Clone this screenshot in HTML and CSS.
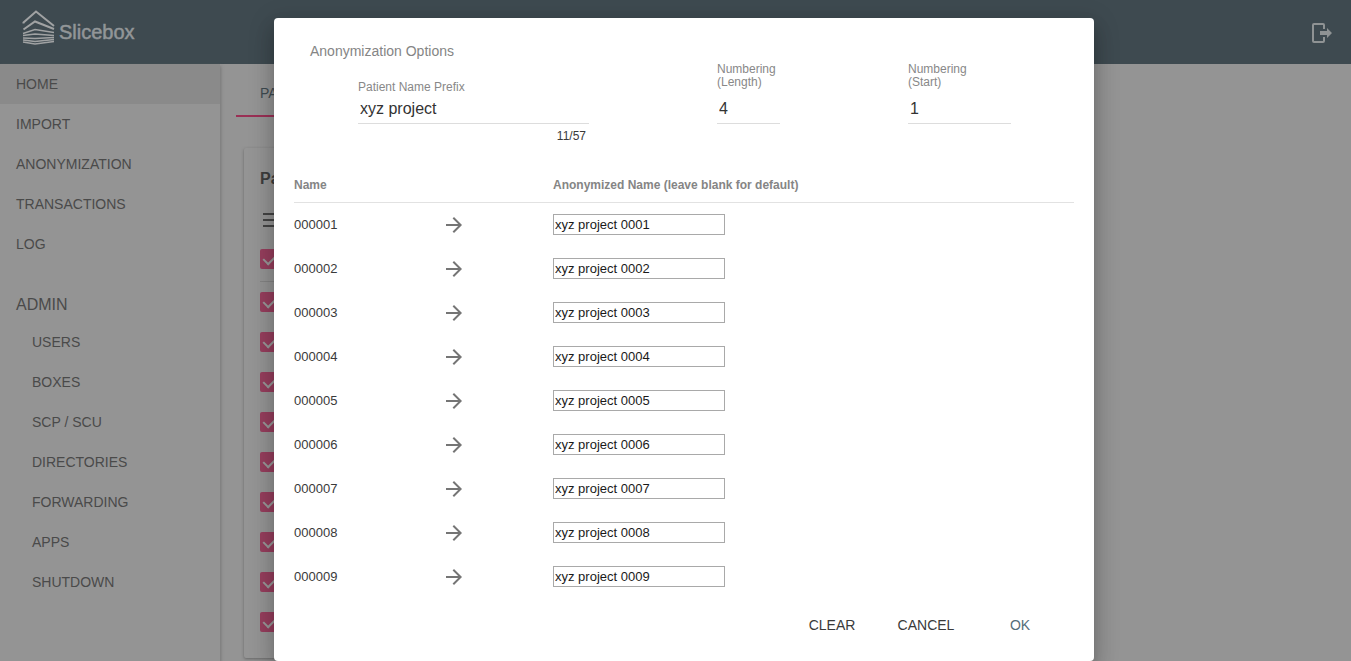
FILE: index.html
```html
<!DOCTYPE html>
<html lang="en">
<head>
<meta charset="utf-8">
<title>Slicebox</title>
<link rel="stylesheet" href="styles.css">
</head>
<body>
<svg class="defs" aria-hidden="true">
  <symbol id="arrow" viewBox="0 0 24 24"><path d="M12 4l-1.41 1.41L16.17 11H4v2h12.170l-5.580 5.590L12 20l8-8z"/></symbol>
</svg>
<div class="app">
  <header class="toolbar">
    <a class="brand" href="#">
      <svg class="logo" viewBox="0 0 33 36" aria-hidden="true">
        <path class="roof" d="M1.500 13.500V12.500L14 1.500L32 16M1.500 19.500L13 11.500L32 19"/>
        <path d="M1 23.500L13 19.500L32 22.500M1 25.500L13 24L32 25.500M1 28L13 28.500L32 27.500M1 30L13 31.500L32 29.500M1 32L13 34L32 31.500"/>
      </svg>
      <span>Slicebox</span>
    </a>
    <button class="logout" aria-label="Log out">
      <svg viewBox="0 0 22 22" aria-hidden="true"><path class="door" d="M13 7V3Q13 2 12 2H3Q2 2 2 3V19Q2 20 3 20H12Q13 20 13 19V15"/><path class="out" d="M9 9H16V6L21 11L16 16V13H9Z"/></svg>
    </button>
  </header>
  <div class="body">
    <nav class="sidenav">
      <a class="active" href="#">HOME</a>
      <a href="#">IMPORT</a>
      <a href="#">ANONYMIZATION</a>
      <a href="#">TRANSACTIONS</a>
      <a href="#">LOG</a>
      <h2>ADMIN</h2>
      <div class="sub">
        <a href="#">USERS</a>
        <a href="#">BOXES</a>
        <a href="#">SCP / SCU</a>
        <a href="#">DIRECTORIES</a>
        <a href="#">FORWARDING</a>
        <a href="#">APPS</a>
        <a href="#">SHUTDOWN</a>
      </div>
    </nav>
    <main class="content">
      <div class="tabs"><button class="tab">PA</button></div>
      <section class="card">
        <h3>Pa</h3>
        <button class="menu" aria-label="Menu"><i></i><i></i><i></i></button>
        <label class="check all"><input type="checkbox" checked aria-label="Select all"></label>
        <label class="check"><input type="checkbox" checked aria-label="Select 1"></label>
        <label class="check"><input type="checkbox" checked aria-label="Select 2"></label>
        <label class="check"><input type="checkbox" checked aria-label="Select 3"></label>
        <label class="check"><input type="checkbox" checked aria-label="Select 4"></label>
        <label class="check"><input type="checkbox" checked aria-label="Select 5"></label>
        <label class="check"><input type="checkbox" checked aria-label="Select 6"></label>
        <label class="check"><input type="checkbox" checked aria-label="Select 7"></label>
        <label class="check"><input type="checkbox" checked aria-label="Select 8"></label>
        <label class="check"><input type="checkbox" checked aria-label="Select 9"></label>
      </section>
    </main>
  </div>
</div>
<div class="backdrop">
  <form class="dialog" role="dialog" aria-labelledby="title">
    <h1 id="title">Anonymization Options</h1>
    <div class="fields">
      <div class="field">
        <label for="prefix">Patient Name Prefix</label>
        <input id="prefix" type="text" value="xyz project">
        <span class="count">11/57</span>
      </div>
      <div class="field">
        <label for="length">Numbering<br>(Length)</label>
        <input id="length" type="text" value="4">
      </div>
      <div class="field">
        <label for="start">Numbering<br>(Start)</label>
        <input id="start" type="text" value="1">
      </div>
    </div>
    <table class="names">
      <thead><tr><th class="c-name">Name</th><th class="c-arrow"></th><th>Anonymized Name (leave blank for default)</th></tr></thead>
      <tbody>
        <tr><td>000001</td><td class="to"><svg class="arrow"><use href="#arrow"/></svg></td><td><input type="text" aria-label="Anonymized name 000001" value="xyz project 0001"></td></tr>
        <tr><td>000002</td><td class="to"><svg class="arrow"><use href="#arrow"/></svg></td><td><input type="text" aria-label="Anonymized name 000002" value="xyz project 0002"></td></tr>
        <tr><td>000003</td><td class="to"><svg class="arrow"><use href="#arrow"/></svg></td><td><input type="text" aria-label="Anonymized name 000003" value="xyz project 0003"></td></tr>
        <tr><td>000004</td><td class="to"><svg class="arrow"><use href="#arrow"/></svg></td><td><input type="text" aria-label="Anonymized name 000004" value="xyz project 0004"></td></tr>
        <tr><td>000005</td><td class="to"><svg class="arrow"><use href="#arrow"/></svg></td><td><input type="text" aria-label="Anonymized name 000005" value="xyz project 0005"></td></tr>
        <tr><td>000006</td><td class="to"><svg class="arrow"><use href="#arrow"/></svg></td><td><input type="text" aria-label="Anonymized name 000006" value="xyz project 0006"></td></tr>
        <tr><td>000007</td><td class="to"><svg class="arrow"><use href="#arrow"/></svg></td><td><input type="text" aria-label="Anonymized name 000007" value="xyz project 0007"></td></tr>
        <tr><td>000008</td><td class="to"><svg class="arrow"><use href="#arrow"/></svg></td><td><input type="text" aria-label="Anonymized name 000008" value="xyz project 0008"></td></tr>
        <tr><td>000009</td><td class="to"><svg class="arrow"><use href="#arrow"/></svg></td><td><input type="text" aria-label="Anonymized name 000009" value="xyz project 0009"></td></tr>
      </tbody>
    </table>
    <div class="actions">
      <button type="button">CLEAR</button>
      <button type="button">CANCEL</button>
      <button type="button" class="primary">OK</button>
    </div>
  </form>
</div>
</body>
</html>
```
FILE: styles.css
```css
* { box-sizing: border-box; }
body {
  margin: 0;
  height: 100vh;
  overflow: hidden;
  font-family: "Liberation Sans", Arial, sans-serif;
  font-size: 14px;
  color: #3a3a3a;
}
a { color: inherit; text-decoration: none; }
button { font: inherit; color: inherit; border: 0; background: none; padding: 0; }
h1, h2, h3 { margin: 0; font-weight: normal; }
.defs { position: absolute; width: 0; height: 0; }

.app { height: 100vh; display: flex; flex-direction: column; background: #949494; }
.toolbar {
  height: 64px;
  flex: none;
  display: flex;
  align-items: center;
  justify-content: space-between;
  padding: 0 18px 0 22px;
  background: #3e4a50;
  color: #929698;
}
.brand { display: flex; align-items: center; gap: 4px; font-size: 20px; -webkit-text-stroke: 0.5px; }
.logo { width: 33px; height: 36px; margin-bottom: 8px; fill: none; stroke: #a0a2a3; stroke-width: 1.4; }
.roof { stroke-width: 2; }
.logout { display: flex; padding-top: 2px; }
.logout svg { width: 22px; height: 22px; }
.door { fill: none; stroke: #8f9394; stroke-width: 2; }
.out { fill: #8f9394; }

.body { flex: 1; display: flex; min-height: 0; }
.sidenav {
  width: 220px;
  flex: none;
  overflow: hidden;
  color: #4a4a4a;
  box-shadow: 1px 2px 3px #777;
}
.sidenav a { display: block; line-height: 40px; padding-left: 16px; }
.sidenav .active { background: #8a8a8a; }
.sidenav h2 { font-size: 16px; line-height: 35px; padding: 23px 0 0 16px; }
.sub { padding-left: 16px; }

.content { flex: 1; max-width: 840px; padding: 0 16px; min-width: 0; }
.tabs { display: flex; }
.tab { width: 120px; height: 53px; padding: 6px 0 0 24px; text-align: left; border-bottom: 2px solid #9a3055; color: #3e4a50; }
.card { margin: 31px 8px 0; height: 510px; padding: 21px 16px; border-radius: 2px; box-shadow: 0 1px 3px #666; }
.card h3 { font-size: 16px; line-height: 20px; font-weight: bold; color: #3d3d3d; }
.menu { display: flex; flex-direction: column; gap: 4px; padding: 24px 0 0 3px; }
.menu i { width: 18px; height: 2px; background: #444; }
.check { display: flex; align-items: center; height: 40px; }
.all { height: 43px; margin: 12px 0 0; padding-bottom: 2px; border-bottom: 1px solid #838383; }
.check input {
  appearance: none;
  width: 20px;
  height: 20px;
  margin: 0;
  border-radius: 2px;
  background: #963e5d;
  display: grid;
  place-items: center;
}
.check input::after { content: ""; width: 6px; height: 14px; margin: 0 0 6px 1px; border: solid #999; border-width: 0 2px 2px 0; transform: rotate(45deg); }

.backdrop { position: absolute; inset: 0; display: flex; justify-content: center; align-items: flex-start; padding: 18px 16px 0 33px; }
.dialog {
  width: 820px;
  padding: 21px 20px 18px;
  background: #fff;
  border-radius: 4px;
  box-shadow: 0 7px 8px -4px rgba(0,0,0,.2), 0 13px 19px 2px rgba(0,0,0,.14), 0 5px 24px 4px rgba(0,0,0,.12);
}
.dialog h1 { font-size: 14px; line-height: 24px; padding-left: 16px; color: #858585; }
.fields { display: grid; grid-template-columns: 231px 63px 103px; column-gap: 128px; padding-left: 64px; height: 109px; }
.field { display: flex; flex-direction: column; }
.field label { height: 31px; line-height: 13px; font-size: 12px; color: #888; }
.field:first-child label { padding-top: 18px; }
.field input {
  width: 100%;
  height: 30px;
  padding: 2px;
  border: 0;
  border-bottom: 1px solid #ddd;
  font: 16px/24px "Liberation Sans", Arial, sans-serif;
  color: #333;
  background: none;
  outline: 0;
}
.count { font-size: 12px; line-height: 24px; align-self: flex-end; padding-right: 3px; }
.names { width: 100%; border-collapse: collapse; table-layout: fixed; font-size: 13px; text-align: left; }
.names th { height: 30px; padding: 0 0 4px; font-size: 12px; color: #858585; border-bottom: 1px solid #e2e2e2; }
.names td { height: 44px; padding: 0; }
.names .to { padding-top: 2px; }
.c-name { width: 148px; }
.c-arrow { width: 111px; }
.arrow { display: block; width: 24px; height: 24px; fill: #757575; }
.names input { display: block; width: 172px; height: 21px; padding: 1px; border: 1px solid #a9a9a9; font: 13px "Liberation Sans", Arial, sans-serif; color: #1a1a1a; }
.actions { display: flex; justify-content: flex-end; gap: 6px; padding: 9px 10px 0; }
.actions button { min-width: 88px; height: 36px; }
.actions .primary { color: #546e7a; }
```
